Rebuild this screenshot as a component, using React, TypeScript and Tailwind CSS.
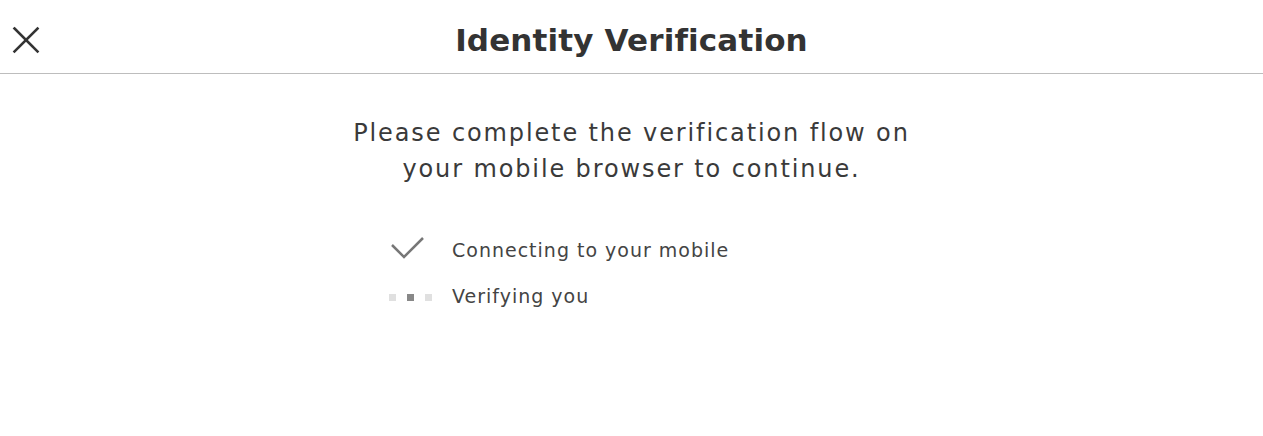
import React from "react";

export default function App() {
  return (
    <div className="w-[1263px] h-[436px] bg-white text-[#333]" style={{ fontFamily: "'DejaVu Sans', Verdana, sans-serif" }}>
      <div className="relative h-[74px] border-b border-[#bdbdbd] flex items-center justify-center">
        <button className="absolute left-[12px] top-[26px] w-[28px] h-[28px] flex items-center justify-center">
          <svg width="28" height="28" viewBox="0 0 28 28" fill="none" stroke="#333" strokeWidth="2.6" strokeLinecap="square">
            <line x1="2.5" y1="2.5" x2="25.5" y2="25.5" />
            <line x1="25.5" y1="2.5" x2="2.5" y2="25.5" />
          </svg>
        </button>
        <h1 className="text-[31px] font-bold text-[#333] mt-[8px] leading-none tracking-[0.15px]">Identity Verification</h1>
      </div>
      <div className="pt-[41px] text-center text-[24px] leading-[36px] text-[#3a3a3a] tracking-[1.88px]">
        <p>Please complete the verification flow on</p>
        <p>your mobile browser to continue.</p>
      </div>
      <div className="ml-[389px] mt-[51px] flex flex-col gap-[22px] text-[19px] text-[#444] tracking-[1px]">
        <div className="flex items-center h-[24px]">
          <div className="w-[63px] h-[24px] relative">
            <svg className="absolute left-[1px] top-[-2px]" width="36" height="26" viewBox="0 0 36 26" fill="none" stroke="#777" strokeWidth="2.5">
              <polyline points="2,9 14,21 33,2" />
            </svg>
          </div>
          <span>Connecting to your mobile</span>
        </div>
        <div className="flex items-center h-[24px]">
          <div className="w-[63px] flex items-center gap-[11px] pt-[2px]">
            <span className="w-[7px] h-[7px] bg-[#e0e0e0]" />
            <span className="w-[7px] h-[7px] bg-[#888]" />
            <span className="w-[7px] h-[7px] bg-[#e0e0e0]" />
          </div>
          <span>Verifying you</span>
        </div>
      </div>
    </div>
  );
}
